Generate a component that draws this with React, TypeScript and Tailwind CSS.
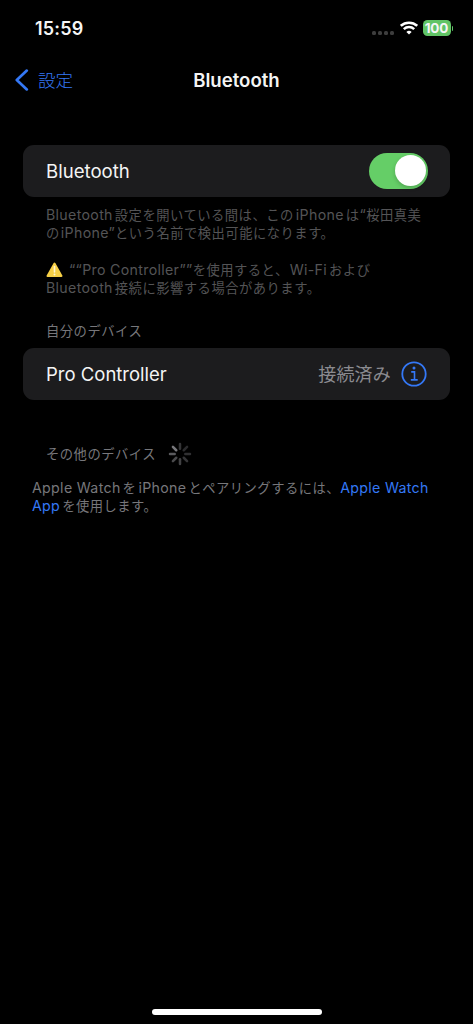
import type { ReactNode } from "react";

function Latin({ children, className = "" }: { children: ReactNode; className?: string }) {
  return <span className={`text-[14.2px] tracking-[0.32px] ${className}`}>{children}</span>;
}

function Line({ children, className = "" }: { children: ReactNode; className?: string }) {
  return (
    <div className={`flex h-[18.2px] items-baseline whitespace-pre text-[13.3px] leading-[18.2px] tracking-[0.5px] ${className}`}>
      {children}
    </div>
  );
}

function StatusBar() {
  return (
    <div className="flex h-[56px] items-center justify-between pr-[20px] pl-[35px]">
      <span className="text-[18px] font-semibold tracking-[0.2px]">15:59</span>
      <div className="flex items-center">
        <div className="mt-[9px] mr-[6px] flex gap-[2px]">
          {[0, 1, 2, 3].map((i) => (
            <i key={i} className="size-[4px] rounded-[1.5px] bg-[#3d3d3d]" />
          ))}
        </div>
        <svg className="mr-[5px]" width="18" height="14" viewBox="0 0 18 14" fill="none" stroke="#fff" strokeWidth="2.5">
          <path d="M.8 4.8C5.4.6 12.6.6 17.2 4.8M3.8 8.1C6.8 5.3 11.2 5.3 14.2 8.1" />
          <path d="M6.4 10.9C7.8 9.5 10.2 9.5 11.6 10.9L9 13.6Z" fill="#fff" stroke="none" />
        </svg>
        <div className="flex h-[16px] w-[28px] items-center justify-center rounded-[4.5px] bg-[#61c466] text-[13.5px] font-bold tracking-[-0.1px]">
          100
        </div>
        <i className="ml-[1px] h-[5px] w-[1.5px] rounded-r-full bg-[#61c466]" />
      </div>
    </div>
  );
}

function Spinner() {
  const shades = ["#343436", "#2b2b2d", "#303032", "#353537", "#414143", "#4a4a4c", "#5a5a5d", "#77777b"];
  return (
    <svg width="24" height="24" viewBox="-12 -12 24 24" strokeWidth="2.5" strokeLinecap="round">
      {shades.map((shade, i) => (
        <line key={i} x1="0" y1="-5.3" x2="0" y2="-10" stroke={shade} transform={`rotate(${i * 45})`} />
      ))}
    </svg>
  );
}

export default function App() {
  return (
    <div
      lang="ja"
      className="flex h-[1024px] w-[473px] flex-col overflow-hidden bg-black font-['Inter','Noto_Sans_CJK_JP',sans-serif] text-[#f5f5f5]"
    >
      <StatusBar />
      <header className="grid h-[48px] grid-cols-[1fr_auto_1fr] items-center">
        <div className="flex items-center pl-[15px] text-[#3478f6]">
          <svg width="14" height="22" viewBox="0 0 14 22" fill="none" stroke="currentColor" strokeWidth="2.7" strokeLinecap="round" strokeLinejoin="round">
            <path d="M11.8 1.6L1.8 11L11.8 20.4" />
          </svg>
          <span className="ml-[9px] pt-[2px] text-[17.5px] font-light">設定</span>
        </div>
        <h1 className="pt-[2px] text-[18.6px] font-semibold">Bluetooth</h1>
      </header>
      <main className="px-[23px] pt-[41px]">
        <div className="flex h-[51.5px] items-center justify-between rounded-[11px] bg-[#1c1c1e] pr-[22px] pl-[23px]">
          <span className="pt-[2px] text-[18.6px]">Bluetooth</span>
          <div className="flex h-[36px] w-[59px] items-center justify-end rounded-full bg-[#65ce67] pr-[2.5px]">
            <div className="size-[31px] rounded-full bg-white shadow-[0_2px_4px_#0003]" />
          </div>
        </div>
        <div className="mt-[9.5px] pl-[23px] text-[#545456]">
          <Line>
            <Latin className="mr-[2px]">Bluetooth</Latin>設定を開いている間は、この<Latin className="mx-[2px]">iPhone</Latin>は<Latin>“</Latin>桜田真美
          </Line>
          <Line>
            の<Latin className="ml-[1px]">iPhone”</Latin>という名前で検出可能になります。
          </Line>
          <Line className="mt-[18.2px]">
            <svg className="mt-[1px] mr-[6px] self-start" width="17" height="16" viewBox="0 0 17 16">
              <path d="M8.5 1.5L15.5 14H1.5Z" fill="#f6cf46" stroke="#f6cf46" strokeWidth="2" strokeLinejoin="round" />
              <path d="M8.5 4.5V10" stroke="#fff6d2" strokeWidth="1.6" strokeLinecap="round" />
              <circle cx="8.5" cy="12.6" r="1" fill="#fff6d2" />
            </svg>
            <Latin>““Pro Controller””</Latin>を使用すると、<Latin className="ml-[1px] mr-[2px]">Wi-Fi</Latin>および
          </Line>
          <Line>
            <Latin className="mr-[2px]">Bluetooth</Latin>接続に影響する場合があります。
          </Line>
        </div>
        <Line className="mt-[25px] pl-[23px] text-[#77777b]">自分のデバイス</Line>
        <div className="mt-[8px] flex h-[51.5px] items-center rounded-[11px] bg-[#1c1c1e] pr-[23px] pl-[23px]">
          <span className="pt-[2px] text-[18.5px]">Pro Controller</span>
          <span className="ml-auto pt-[2px] text-[18px] tracking-[0.2px] text-[#8b8b90]">接続済み</span>
          <svg className="ml-[10px]" width="26" height="26" viewBox="0 0 26 26" fill="none" stroke="#3478f6" strokeWidth="1.8">
            <circle cx="13" cy="13" r="11.7" />
            <path d="M10.2 10.9H13.5V18.8M9.8 18.9H16.7" strokeWidth="1.6" />
            <circle cx="13" cy="7" r="1.5" fill="#3478f6" stroke="none" />
          </svg>
        </div>
        <div className="mt-[42px] flex h-[24px] items-center pl-[23px] text-[#77777b]">
          <Line className="mr-[12px]">その他のデバイス</Line>
          <Spinner />
        </div>
        <div className="mt-[13px] pl-[9px] text-[#77777b]">
          <Line>
            <Latin className="mr-[2px]">Apple Watch</Latin>を<Latin className="mx-[2px]">iPhone</Latin>とペアリングするには、<Latin className="text-[#3478f6]">Apple Watch</Latin>
          </Line>
          <Line>
            <Latin className="mr-[2px] text-[#3478f6]">App</Latin>を使用します。
          </Line>
        </div>
      </main>
      <div className="mt-auto mb-[9px] h-[6px] w-[170px] self-center rounded-full bg-white" />
    </div>
  );
}
